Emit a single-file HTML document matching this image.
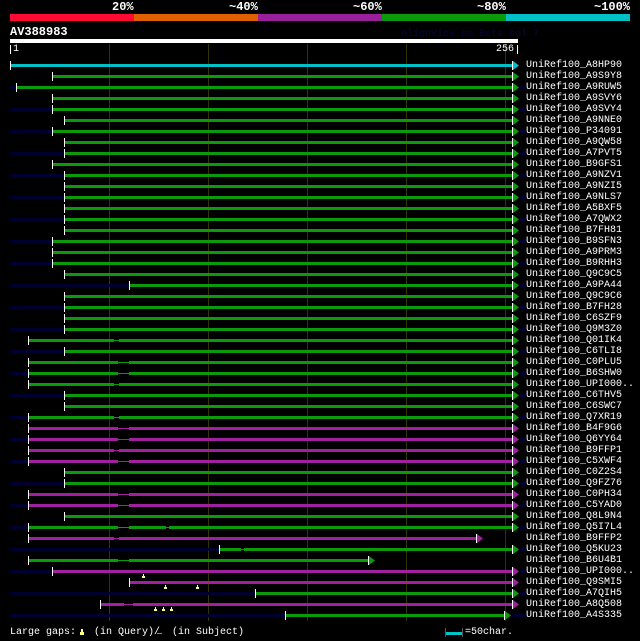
<!DOCTYPE html>
<html><head><meta charset="utf-8"><style>
html,body{margin:0;padding:0;background:#000;width:640px;height:641px;overflow:hidden}
body{position:relative;font-family:"Liberation Mono","DejaVu Sans Mono",monospace;color:#fff}
.t{position:absolute;font-size:12px;font-weight:bold;line-height:12px;white-space:pre}
#labels{position:absolute;left:526px;top:60px;font-size:10px;line-height:11px;white-space:pre;color:#fff}
svg{position:absolute;left:0;top:0}
</style></head><body>
<svg width="640" height="641" id="s">
<rect x="10" y="14" width="124" height="7" fill="#ff0a33"/>
<rect x="134" y="14" width="124" height="7" fill="#e06000"/>
<rect x="258" y="14" width="124" height="7" fill="#9a1f9a"/>
<rect x="382" y="14" width="124" height="7" fill="#0a9a0a"/>
<rect x="506" y="14" width="124" height="7" fill="#00c0c8"/>
<rect x="10" y="39" width="508" height="4" fill="#fff"/>
<rect x="10" y="45" width="1" height="9" fill="#fff"/>
<rect x="517" y="45" width="1" height="9" fill="#fff"/>
<g id="grid" fill="#333300"></g>
<g id="rows"></g>
<rect x="445" y="628" width="1" height="9" fill="#555"/>
<rect x="446" y="632" width="16" height="3" fill="#00c0c8"/>
<rect x="462" y="628" width="1" height="9" fill="#555"/>
<rect x="80" y="632" width="4" height="3" fill="#ffff80"/>
<rect x="81" y="629" width="2" height="3" fill="#ffff80"/>
<rect x="157" y="633" width="5" height="1" fill="#00c0c8"/>
</svg>
<div class="t" style="left:112px;top:1px">20%</div>
<div class="t" style="left:229px;top:1px">~40%</div>
<div class="t" style="left:353px;top:1px">~60%</div>
<div class="t" style="left:477px;top:1px">~80%</div>
<div class="t" style="left:594px;top:1px">~100%</div>
<div class="t" style="left:10px;top:26px">AV388983</div>
<div class="t" style="left:401px;top:29px;font-size:10px;color:#05052a">AlignView.pm Beta rel.7</div>
<div style="position:absolute;left:13px;top:44px;font-size:10px;line-height:12px">1</div>
<div style="position:absolute;left:496px;top:44px;font-size:10px;line-height:12px">256</div>
<div style="position:absolute;left:10px;top:627px;font-size:10px;line-height:12px;white-space:pre">Large gaps:   (in Query)/  (in Subject)</div>
<div style="position:absolute;left:465px;top:627px;font-size:10px;line-height:12px">=50char.</div>
<div id="labels">UniRef100_A8HP90
UniRef100_A9S9Y8
UniRef100_A9RUW5
UniRef100_A9SVY6
UniRef100_A9SVY4
UniRef100_A9NNE0
UniRef100_P34091
UniRef100_A9QW58
UniRef100_A7PVT5
UniRef100_B9GFS1
UniRef100_A9NZV1
UniRef100_A9NZI5
UniRef100_A9NLS7
UniRef100_A5BXF5
UniRef100_A7QWX2
UniRef100_B7FH81
UniRef100_B9SFN3
UniRef100_A9PRM3
UniRef100_B9RHH3
UniRef100_Q9C9C5
UniRef100_A9PA44
UniRef100_Q9C9C6
UniRef100_B7FH28
UniRef100_C6SZF9
UniRef100_Q9M3Z0
UniRef100_Q01IK4
UniRef100_C6TLI8
UniRef100_C0PLU5
UniRef100_B6SHW0
UniRef100_UPI000..
UniRef100_C6THV5
UniRef100_C6SWC7
UniRef100_Q7XR19
UniRef100_B4F9G6
UniRef100_Q6YY64
UniRef100_B9FFP1
UniRef100_C5XWF4
UniRef100_C0Z2S4
UniRef100_Q9FZ76
UniRef100_C0PH34
UniRef100_C5YAD0
UniRef100_Q8L9N4
UniRef100_Q5I7L4
UniRef100_B9FFP2
UniRef100_Q5KU23
UniRef100_B6U4B1
UniRef100_UPI000..
UniRef100_Q9SMI5
UniRef100_A7QIH5
UniRef100_A8Q508
UniRef100_A4S335</div>
<script>
var NS="http://www.w3.org/2000/svg";
function r(g,x,y,w,h,c){var e=document.createElementNS(NS,"rect");e.setAttribute("x",x);e.setAttribute("y",y);e.setAttribute("width",w);e.setAttribute("height",h);e.setAttribute("fill",c);g.appendChild(e);}
var grid=document.getElementById("grid");
[109,208,307,406,505].forEach(function(x){r(grid,x,44,1,577,"#333300");});
var G="#0a9a0a",M="#a020a0",C="#00c0c8",N="#000030";
var A=[[114,119]],B=[[118,129]];
var d=[[11,C,0,[],513],[53,G,0,[],513],[17,G,1,[],513],[53,G,0,[],513],[53,G,1,[],513],[65,G,0,[],513],[53,G,1,[],513],[65,G,0,[],513],[65,G,1,[],513],[53,G,0,[],513],
[65,G,1,[],513],[65,G,0,[],513],[65,G,1,[],513],[65,G,0,[],513],[65,G,1,[],513],[65,G,0,[],513],[53,G,1,[],513],[53,G,0,[],513],[53,G,1,[],513],[65,G,0,[],513],
[130,G,1,[],513],[65,G,0,[],513],[65,G,1,[],513],[65,G,0,[],513],[65,G,1,[],513],[29,G,0,A,513],[65,G,1,[],513],[29,G,0,B,513],[29,G,1,B,513],[29,G,0,A,513],
[65,G,1,[],513],[65,G,0,[],513],[29,G,1,A,513],[29,M,0,B,513],[29,M,1,B,513],[29,M,0,A,513],[29,M,1,B,513],[65,G,0,[],513],[65,G,1,[],513],[29,M,0,B,513],
[29,M,1,B,513],[65,G,0,[],513],[29,G,1,[[118,129],[166,169]],513],[29,M,0,A,477],[220,G,1,[[241,244]],513],[29,G,0,B,369],[53,M,1,[],513],[130,M,0,[],513],[256,G,1,[],513],[101,M,0,[[124,133]],513],
[286,G,1,[],505]];
var rows=document.getElementById("rows");
d.forEach(function(a,i){
 var y=65+11*i,s=a[0],c=a[1],e=a[4];
 if(a[2]){r(rows,10,y-1,s-10,3,N); if(e>=505) r(rows,e+6,y-1,526-e-6,3,N);}
 var x=s;
 a[3].forEach(function(g){r(rows,x,y-1,g[0]-x,3,c);r(rows,g[0],y,g[1]-g[0],1,c);x=g[1];});
 r(rows,x,y-1,e-x,3,c);
 r(rows,s-1,y-4,1,9,"#fff");
 r(rows,e-1,y-4,1,9,"#fff");
 var p=document.createElementNS(NS,"polygon");p.setAttribute("points",e+","+(y-4)+" "+(e+6)+","+(y+0.5)+" "+e+","+(y+5));p.setAttribute("fill",c);rows.appendChild(p);
});
[[143,575],[165,586],[197,586],[155,608],[163,608],[171,608]].forEach(function(m){r(rows,m[0]-1,m[1]+1,3,2,"#ffff80");r(rows,m[0],m[1]-1,1,2,"#ffff80");});
</script>
</body></html>
